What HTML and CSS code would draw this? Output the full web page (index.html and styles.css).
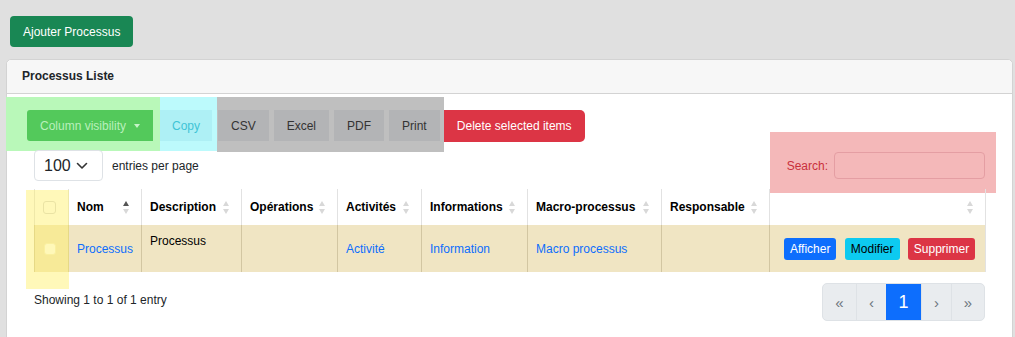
FILE: index.html
```html
<!DOCTYPE html>
<html lang="fr">
<head>
  <meta charset="UTF-8">
  <meta name="viewport" content="width=device-width, initial-scale=1.0">
  <title>Processus</title>
  <link rel="stylesheet" href="styles.css">
</head>
<body>
  <div class="page">
    <button type="button" class="btn_add">Ajouter Processus</button>

    <div class="card">
      <div class="card_header">Processus Liste</div>
      <div class="card_body">

        <div class="toolbar">
          <div class="grp grp_green">
            <button type="button" class="btn_colvis">Column visibility <span class="caret"></span></button>
          </div>
          <div class="grp grp_cyan">
            <button type="button" class="btn_copy">Copy</button>
          </div>
          <div class="grp grp_gray">
            <button type="button" class="btn_exp">CSV</button>
            <button type="button" class="btn_exp">Excel</button>
            <button type="button" class="btn_exp">PDF</button>
            <button type="button" class="btn_exp">Print</button>
          </div>
          <button type="button" class="btn_delete">Delete selected items</button>
        </div>

        <div class="length_row">
          <div class="length">
            <div class="length_select">
              <span>100</span>
              <svg width="12" height="8" viewBox="0 0 12 8"><path d="M1.5 1.5 L6 6 L10.5 1.5" fill="none" stroke="#333" stroke-width="1.6" stroke-linecap="round" stroke-linejoin="round"/></svg>
            </div>
            <span>entries per page</span>
          </div>
          <div class="search">
            <label>Search:</label>
            <div class="search_input"></div>
          </div>
        </div>

        <div class="table_wrap">
          <table class="list">
            <colgroup>
              <col style="width:34px"><col style="width:73px"><col style="width:100px"><col style="width:96px"><col style="width:84px"><col style="width:106px"><col style="width:134px"><col style="width:108px"><col style="width:216px">
            </colgroup>
            <thead>
              <tr>
                <th class="cb_cell"><span class="cb"></span></th>
                <th><div class="th_in"><span>Nom</span><i class="sort asc"></i></div></th>
                <th><div class="th_in"><span>Description</span><i class="sort"></i></div></th>
                <th><div class="th_in"><span>Opérations</span><i class="sort"></i></div></th>
                <th><div class="th_in"><span>Activités</span><i class="sort"></i></div></th>
                <th><div class="th_in"><span>Informations</span><i class="sort"></i></div></th>
                <th><div class="th_in"><span>Macro-processus</span><i class="sort"></i></div></th>
                <th><div class="th_in"><span>Responsable</span><i class="sort"></i></div></th>
                <th><div class="th_in"><span></span><i class="sort"></i></div></th>
              </tr>
            </thead>
            <tbody>
              <tr>
                <td class="cb_cell"><span class="cb cb_fill"></span></td>
                <td><a href="#">Processus</a></td>
                <td class="top">Processus</td>
                <td></td>
                <td><a href="#">Activité</a></td>
                <td><a href="#">Information</a></td>
                <td><a href="#">Macro processus</a></td>
                <td></td>
                <td class="actions">
                  <button type="button" class="btn_sm blue">Afficher</button>
                  <button type="button" class="btn_sm cyan">Modifier</button>
                  <button type="button" class="btn_sm red">Supprimer</button>
                </td>
              </tr>
            </tbody>
          </table>
          <div class="hl_yellow"></div>
        </div>

        <div class="footer_row">
          <div class="info">Showing 1 to 1 of 1 entry</div>
          <ul class="pager">
            <li>«</li>
            <li>‹</li>
            <li class="active">1</li>
            <li>›</li>
            <li>»</li>
          </ul>
        </div>

      </div>
    </div>
  </div>
</body>
</html>
```

FILE: styles.css
```css
*{
  margin: 0;
  padding: 0;
  box-sizing: border-box;
}
body{
  background-color: #e0e0e0;
  font-family: "Liberation Sans", Arial, sans-serif;
  font-size: 12px;
  color: #212529;
  overflow: hidden;
}
button{
  font-family: inherit;
  font-size: 12px;
  border: none;
}
.page{
  padding: 16px 2px 0 6px;
}
.btn_add{
  margin-left: 4px;
  height: 31px;
  padding: 0 13px;
  background-color: #198754;
  color: #fff;
  border-radius: 4px;
}
.card{
  margin-top: 12px;
  width: 1007px;
  background-color: #fff;
  border: 1px solid #d3d3d3;
  border-radius: 5px;
  padding-bottom: 30px;
}
.card_header{
  height: 34px;
  padding: 0 15px;
  line-height: 33px;
  font-weight: bold;
  background-color: #f7f7f7;
  border-bottom: 1px solid #d3d3d3;
  border-radius: 5px 5px 0 0;
}
.card_body{
  padding: 3px 27px 0 27px;
}

/* export buttons */
.toolbar{
  display: flex;
  align-items: flex-start;
  margin-left: -28px;
}
.grp{
  display: flex;
  padding: 13px 0 10px 0;
}
.grp_green{
  background-color: #b9f8b9;
  padding-left: 21px;
  padding-right: 7px;
  width: 154px;
}
.grp_cyan{
  background-color: #bcfafc;
  padding-left: 0;
  padding-right: 5px;
  width: 57px;
}
.grp_gray{
  background-color: #bfbfbf;
  padding: 13px 4px 11px 1px;
  gap: 5px;
}
.btn_colvis{
  height: 31px;
  width: 126px;
  padding: 0 0 0 13px;
  text-align: left;
  background-color: #53c95b;
  color: #b9f0bc;
  border-radius: 3px 0 0 3px;
}
.caret{
  display: inline-block;
  margin-left: 5px;
  vertical-align: 2px;
  border-left: 3.5px solid transparent;
  border-right: 3.5px solid transparent;
  border-top: 4px solid #c6f3c8;
}
.btn_copy{
  height: 31px;
  width: 52px;
  background-color: #aef0f5;
  color: #3ec4d5;
}
.btn_exp{
  height: 31px;
  padding: 0 13px;
  background-color: #b3b4b6;
  color: #333;
}
.btn_delete{
  margin-top: 13px;
  height: 32px;
  width: 141px;
  background-color: #dc3545;
  color: #fff;
  border-radius: 0 5px 5px 0;
}

/* length + search */
.length_row{
  display: flex;
  justify-content: space-between;
  align-items: flex-start;
  margin-top: -2px;
}
.length{
  display: flex;
  align-items: center;
  gap: 9px;
}
.length_select{
  width: 69px;
  height: 31px;
  border: 1px solid #dee2e6;
  border-radius: 4px;
  display: flex;
  align-items: center;
  justify-content: space-between;
  padding: 0 14px 0 9px;
  font-size: 16px;
  color: #212529;
}
.search{
  display: flex;
  align-items: center;
  gap: 6px;
  margin: -18px -11px -4px 0;
  padding: 20px 11px 14px 17px;
  background-color: #f4b8b9;
}
.search label{
  color: #c9303c;
}
.search_input{
  width: 151px;
  height: 27px;
  border: 1px solid #e49ea3;
  border-radius: 4px;
}

/* table */
.table_wrap{
  position: relative;
}
.list{
  width: 951px;
  table-layout: fixed;
  border-collapse: collapse;
  border-left: 1px solid #e2e2e2;
  border-right: 1px solid #e2e2e2;
}
.list th{
  height: 36px;
  padding: 0 8px;
  text-align: left;
  font-weight: bold;
  color: #000;
  border-left: 1px solid #e2e2e2;
}
.list td{
  height: 47px;
  padding: 0 8px;
  background-color: #f0e5c3;
  border-left: 1px solid #d2c6a2;
  vertical-align: middle;
}
.list td.top{
  vertical-align: top;
  padding-top: 9px;
  color: #000;
}
.list a{
  color: #0d6efd;
  text-decoration: none;
}
.th_in{
  display: flex;
  align-items: center;
  justify-content: space-between;
}
.sort{
  display: flex;
  flex-direction: column;
  gap: 3px;
  margin-right: 4px;
}
.sort::before, .sort::after{
  content: "";
  border-left: 3.5px solid transparent;
  border-right: 3.5px solid transparent;
}
.sort::before{
  border-bottom: 5px solid #d8d8d8;
}
.sort::after{
  border-top: 5px solid #d8d8d8;
}
.sort.asc::before{
  border-bottom-color: #555;
}
.cb_cell{
  text-align: center;
}
.cb{
  display: inline-block;
  width: 13px;
  height: 13px;
  border: 1px solid #d9d9d9;
  border-radius: 3px;
  vertical-align: middle;
}
.cb_fill{
  width: 12px;
  height: 12px;
  background-color: #fff;
  border-color: #f6f0d0;
  margin-left: -4px;
}
.actions{
  padding-left: 14px !important;
  white-space: nowrap;
}
.btn_sm{
  height: 22px;
  padding: 0 6px;
  border-radius: 3px;
  margin-right: 5px;
}
.btn_sm.blue{ background-color: #0d6efd; color: #fff; }
.btn_sm.cyan{ background-color: #0dcaf0; color: #000; }
.btn_sm.red{ background-color: #dc3545; color: #fff; }
.hl_yellow{
  position: absolute;
  left: -8px;
  top: 1px;
  width: 43px;
  height: 99px;
  background-color: rgba(255, 240, 100, 0.45);
}

/* footer */
.footer_row{
  display: flex;
  justify-content: space-between;
  align-items: center;
  margin-top: 11px;
}
.info{
  margin-top: -4px;
}
.pager{
  list-style-type: none;
  display: flex;
  height: 38px;
  border: 1px solid #dee2e6;
  border-radius: 5px;
  background-color: #e9ecef;
  overflow: hidden;
}
.pager li{
  display: flex;
  align-items: center;
  justify-content: center;
  width: 30px;
  font-size: 15px;
  color: #6c757d;
  border-left: 1px solid #dee2e6;
}
.pager li:first-child{
  width: 33px;
  border-left: none;
}
.pager li:last-child{
  width: 33px;
}
.pager li.active{
  width: 35px;
  background-color: #0d6efd;
  color: #fff;
  font-size: 18px;
  border-left: none;
}
```
